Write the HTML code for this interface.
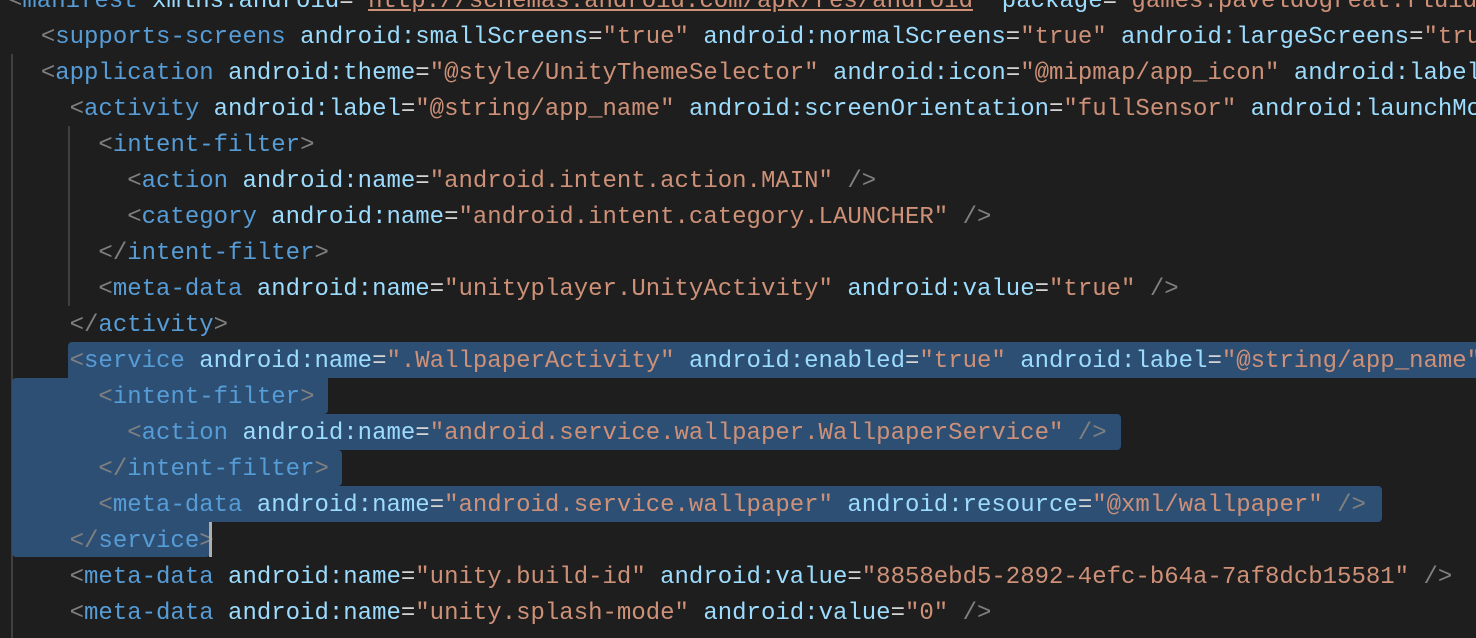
<!DOCTYPE html>
<html><head><meta charset="utf-8"><style>
html,body{margin:0;padding:0;background:#1e1e1e;width:1476px;height:638px;overflow:hidden;position:relative}
.l{position:absolute;left:12px;right:0;overflow:hidden;height:36px;line-height:36px;white-space:pre;font-family:"Liberation Mono","DejaVu Sans Mono",monospace;font-size:24px;color:#d4d4d4;z-index:2;margin-top:2px}
.b{color:#808080}.t{color:#569cd6}.a{color:#9cdcfe}.s{color:#ce9178}.u{text-decoration:underline}
.sel{position:absolute;background:#2e4f74;z-index:1}
.g{position:absolute;width:2px;background:#404040;z-index:1}
</style></head><body>
<div class="g" style="left:11px;top:54px;height:584px"></div>
<div class="g" style="left:68px;top:126px;height:180px"></div>
<div class="g" style="left:68px;top:378px;height:144px;background:#2a3a4c"></div>

<div class="sel" style="left:68px;top:342px;width:1408px;height:36px;border-radius:4px 0 0 0"></div>
<div class="sel" style="left:12px;top:378px;width:316px;height:36px;border-radius:4px 0 4px 0"></div>
<div class="sel" style="left:12px;top:414px;width:1109px;height:36px;border-radius:0 4px 4px 0"></div>
<div class="sel" style="left:12px;top:450px;width:330px;height:36px;border-radius:0 4px 4px 0"></div>
<div class="sel" style="left:12px;top:486px;width:1370px;height:36px;border-radius:0 4px 4px 0"></div>
<div class="sel" style="left:12px;top:522px;width:198px;height:35px;border-radius:0 0 4px 4px"></div>
<div style="position:absolute;left:209px;top:522px;width:3px;height:35px;background:#aeafad;z-index:3"></div>

<div class="l" style="top:-18px;left:8px"><span class="b">&lt;</span><span class="t">manifest</span> <span class="a">xmlns:android</span>=<span class="s">"<span class="u">http://schemas.android.com/apk/res/android</span>"</span> <span class="a">package</span>=<span class="s">"games.paveldogreat.fluid"</span></div>
<div class="l" style="top:18px">  <span class="b">&lt;</span><span class="t">supports-screens</span> <span class="a">android:smallScreens</span>=<span class="s">"true"</span> <span class="a">android:normalScreens</span>=<span class="s">"true"</span> <span class="a">android:largeScreens</span>=<span class="s">"true"</span></div>
<div class="l" style="top:54px">  <span class="b">&lt;</span><span class="t">application</span> <span class="a">android:theme</span>=<span class="s">"@style/UnityThemeSelector"</span> <span class="a">android:icon</span>=<span class="s">"@mipmap/app_icon"</span> <span class="a">android:label</span>=<span class="s">"@string"</span></div>
<div class="l" style="top:90px">    <span class="b">&lt;</span><span class="t">activity</span> <span class="a">android:label</span>=<span class="s">"@string/app_name"</span> <span class="a">android:screenOrientation</span>=<span class="s">"fullSensor"</span> <span class="a">android:launchMode</span></div>
<div class="l" style="top:126px">      <span class="b">&lt;</span><span class="t">intent-filter</span><span class="b">&gt;</span></div>
<div class="l" style="top:162px">        <span class="b">&lt;</span><span class="t">action</span> <span class="a">android:name</span>=<span class="s">"android.intent.action.MAIN"</span> <span class="b">/&gt;</span></div>
<div class="l" style="top:198px">        <span class="b">&lt;</span><span class="t">category</span> <span class="a">android:name</span>=<span class="s">"android.intent.category.LAUNCHER"</span> <span class="b">/&gt;</span></div>
<div class="l" style="top:234px">      <span class="b">&lt;/</span><span class="t">intent-filter</span><span class="b">&gt;</span></div>
<div class="l" style="top:270px">      <span class="b">&lt;</span><span class="t">meta-data</span> <span class="a">android:name</span>=<span class="s">"unityplayer.UnityActivity"</span> <span class="a">android:value</span>=<span class="s">"true"</span> <span class="b">/&gt;</span></div>
<div class="l" style="top:306px">    <span class="b">&lt;/</span><span class="t">activity</span><span class="b">&gt;</span></div>
<div class="l" style="top:342px">    <span class="b">&lt;</span><span class="t">service</span> <span class="a">android:name</span>=<span class="s">".WallpaperActivity"</span> <span class="a">android:enabled</span>=<span class="s">"true"</span> <span class="a">android:label</span>=<span class="s">"@string/app_name"</span></div>
<div class="l" style="top:378px">      <span class="b">&lt;</span><span class="t">intent-filter</span><span class="b">&gt;</span></div>
<div class="l" style="top:414px">        <span class="b">&lt;</span><span class="t">action</span> <span class="a">android:name</span>=<span class="s">"android.service.wallpaper.WallpaperService"</span> <span class="b">/&gt;</span></div>
<div class="l" style="top:450px">      <span class="b">&lt;/</span><span class="t">intent-filter</span><span class="b">&gt;</span></div>
<div class="l" style="top:486px">      <span class="b">&lt;</span><span class="t">meta-data</span> <span class="a">android:name</span>=<span class="s">"android.service.wallpaper"</span> <span class="a">android:resource</span>=<span class="s">"@xml/wallpaper"</span> <span class="b">/&gt;</span></div>
<div class="l" style="top:522px">    <span class="b">&lt;/</span><span class="t">service</span><span class="b">&gt;</span></div>
<div class="l" style="top:558px">    <span class="b">&lt;</span><span class="t">meta-data</span> <span class="a">android:name</span>=<span class="s">"unity.build-id"</span> <span class="a">android:value</span>=<span class="s">"8858ebd5-2892-4efc-b64a-7af8dcb15581"</span> <span class="b">/&gt;</span></div>
<div class="l" style="top:594px">    <span class="b">&lt;</span><span class="t">meta-data</span> <span class="a">android:name</span>=<span class="s">"unity.splash-mode"</span> <span class="a">android:value</span>=<span class="s">"0"</span> <span class="b">/&gt;</span></div>
</body></html>
